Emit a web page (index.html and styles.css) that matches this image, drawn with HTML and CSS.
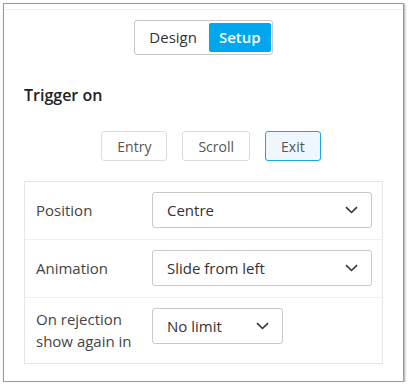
FILE: index.html
```html
<!DOCTYPE html>
<html lang="en">
<head>
    <meta charset="UTF-8">
    <meta name="viewport" content="width=device-width, initial-scale=1.0">
    <title>Setup</title>
    <link rel="stylesheet" href="styles.css">
</head>
<body>

    <!-- Popup settings panel -->
    <div class="panel">
        <div class="panel-top"></div>

        <div class="tabs">
            <span class="tab">Design</span>
            <span class="tab active">Setup</span>
        </div>

        <h3 class="section-title">Trigger on</h3>

        <div class="trigger-group">
            <button class="trigger-btn">Entry</button>
            <button class="trigger-btn">Scroll</button>
            <button class="trigger-btn selected">Exit</button>
        </div>

        <div class="settings">
            <div class="setting-row">
                <div class="setting-label">Position</div>
                <div class="dropdown">
                    <span>Centre</span>
                    <svg width="13" height="8" viewBox="0 0 13 8"><path d="M1 1.2 L6.5 6.5 L12 1.2" fill="none" stroke="#333" stroke-width="1.6"/></svg>
                </div>
            </div>
            <div class="setting-row">
                <div class="setting-label">Animation</div>
                <div class="dropdown">
                    <span>Slide from left</span>
                    <svg width="13" height="8" viewBox="0 0 13 8"><path d="M1 1.2 L6.5 6.5 L12 1.2" fill="none" stroke="#333" stroke-width="1.6"/></svg>
                </div>
            </div>
            <div class="setting-row top">
                <div class="setting-label">On rejection<br>show again in</div>
                <div class="dropdown small">
                    <span>No limit</span>
                    <svg width="13" height="8" viewBox="0 0 13 8"><path d="M1 1.2 L6.5 6.5 L12 1.2" fill="none" stroke="#333" stroke-width="1.6"/></svg>
                </div>
            </div>
        </div>
    </div>

</body>
</html>
```

FILE: styles.css
```css
* {
    box-sizing: border-box;
}
body {
    margin: 0;
    background: #fff;
    font-family: "Open Sans", "Noto Sans", sans-serif;
    color: #333;
}

/* Outer panel */
.panel {
    margin: 3px 0 0 3px;
    width: 401px;
    height: 379px;
    border: 1px solid #999;
    box-shadow: 1px 1px 2px rgba(0, 0, 0, 0.35);
    background: #fff;
    padding: 0 20px;
}
.panel-top {
    height: 6px;
    margin: 0 -20px;
    border-bottom: 1px solid #eee;
}

/* Design / Setup switch */
.tabs {
    display: flex;
    width: max-content;
    margin: 10px auto 0;
    padding: 2px 1px 2px 2px;
    border: 1px solid #c8c8c8;
    border-radius: 3px;
}
.tab {
    height: 29px;
    line-height: 29px;
    padding: 0 12px;
    font-size: 15px;
    color: #333;
}
.tab.active {
    background: #00a6ee;
    color: #fff;
    font-weight: 600;
    padding: 0 10px;
    border-radius: 2px;
}

.section-title {
    margin: 29px 0 0;
    font-size: 16px;
    font-weight: 600;
    line-height: 22px;
    color: #222;
}

/* Trigger buttons */
.trigger-group {
    display: flex;
    justify-content: center;
    gap: 15px;
    margin-top: 25px;
    padding-left: 15px;
}
.trigger-btn {
    height: 30px;
    padding: 0 15px;
    font-family: inherit;
    font-size: 14px;
    color: #555;
    background: #fff;
    border: 1px solid #ddd;
    border-radius: 3px;
}
.trigger-btn.selected {
    background: #eef7fe;
    border-color: #1fa5e6;
}

/* Settings table */
.settings {
    margin-top: 20px;
    border: 1px solid #e6e6e6;
}
.setting-row {
    display: flex;
    align-items: center;
    padding: 10px 10px 11px 11px;
    border-bottom: 1px solid #eef0f2;
}
.setting-row:last-child {
    border-bottom: none;
}
.setting-row.top {
    align-items: flex-start;
}
.setting-label {
    width: 116px;
    font-size: 15px;
    line-height: 22px;
    color: #444;
}
.dropdown {
    display: flex;
    align-items: center;
    justify-content: space-between;
    width: 220px;
    height: 36px;
    padding: 0 13px 0 14px;
    border: 1px solid #c8c8c8;
    border-radius: 3px;
    font-size: 15px;
    color: #333;
}
.dropdown.small {
    width: 131px;
}
```
